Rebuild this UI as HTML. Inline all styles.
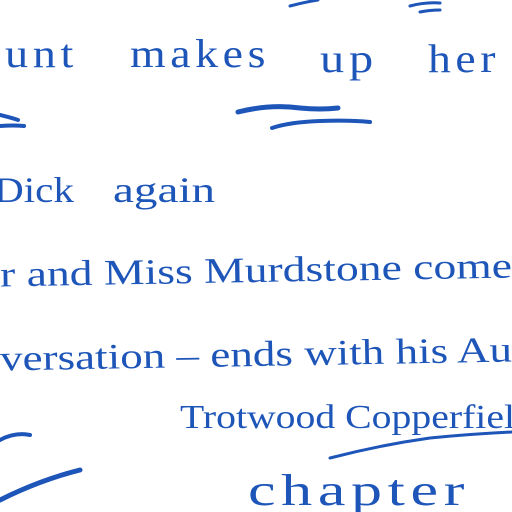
<!DOCTYPE html>
<html><head><style>
html,body{margin:0;padding:0;background:#fff;width:512px;height:512px;overflow:hidden}
svg{display:block}
text{font-family:"Liberation Serif",serif;fill:#1d55b8}
.t{letter-spacing:4px}
</style></head><body>
<svg width="512" height="512" viewBox="0 0 512 512">
<g fill="none" stroke="#1d55b8" stroke-linecap="round">
<path d="M290 6 Q305 2 318 0" stroke-width="3"/>
<path d="M410 6 Q425 2 440 3 M420 12 Q430 10 440 10" stroke-width="3"/>
<path d="M0 115 Q12 118 18 120 M0 126 Q14 125 24 126" stroke-width="4"/>
<path d="M238 112 Q270 104 300 108 Q320 110 338 108" stroke-width="5"/>
<path d="M272 128 Q290 122 320 121 Q350 120 370 122" stroke-width="4"/>
<path d="M0 440 Q15 432 30 435" stroke-width="4"/>
<path d="M0 500 Q40 480 80 470" stroke-width="5"/>
<path d="M330 458 Q380 445 430 438 Q470 434 512 432" stroke-width="3"/>
</g>
<g class="t">
<text x="5" y="67" font-size="40" textLength="73" lengthAdjust="spacingAndGlyphs">unt</text>
<text x="130" y="67" font-size="40" textLength="140" lengthAdjust="spacingAndGlyphs">makes</text>
<text x="320" y="72" font-size="40" textLength="58" lengthAdjust="spacingAndGlyphs">up</text>
<text x="428" y="72" font-size="40" textLength="72" lengthAdjust="spacingAndGlyphs">her</text>
<text x="248" y="505" font-size="44" textLength="222" lengthAdjust="spacingAndGlyphs">chapter</text>
</g>
<text x="-6" y="202" font-size="36" textLength="80" lengthAdjust="spacingAndGlyphs">Dick</text>
<text x="113" y="202" font-size="36" textLength="102" lengthAdjust="spacingAndGlyphs">again</text>
<text x="0" y="282" font-size="36" textLength="512" lengthAdjust="spacingAndGlyphs" transform="rotate(-1 256 270)">r and Miss Murdstone come</text>
<text x="0" y="366" font-size="36" textLength="512" lengthAdjust="spacingAndGlyphs" transform="rotate(-1 256 355)">versation – ends with his  Au</text>
<text x="180" y="428" font-size="34" textLength="335" lengthAdjust="spacingAndGlyphs">Trotwood  Copperfiel</text>
</svg>
</body></html>
